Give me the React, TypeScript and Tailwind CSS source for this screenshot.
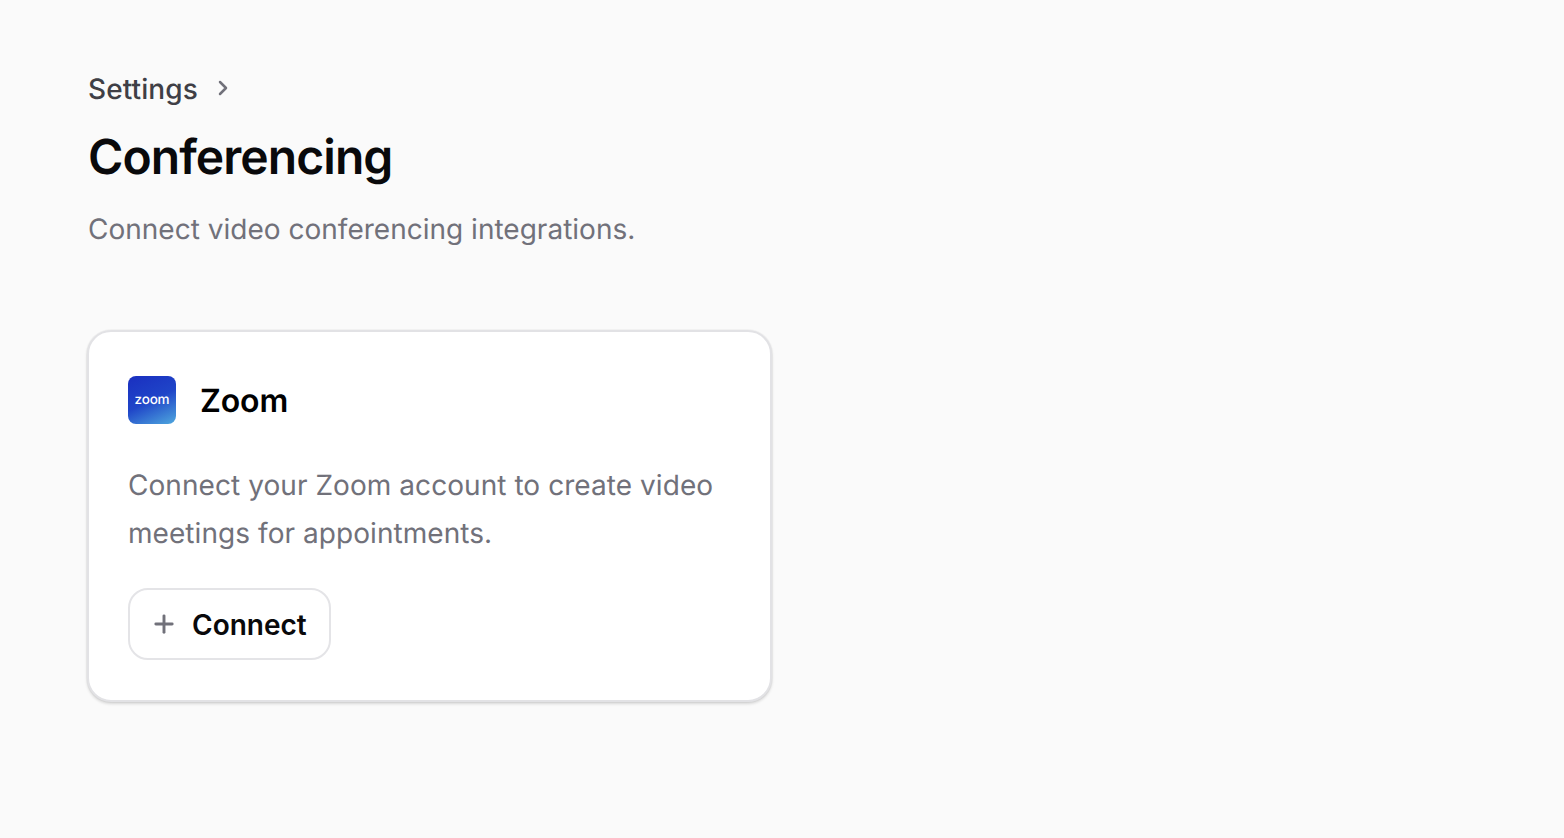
import React from 'react';
import { ChevronRight, Plus } from 'lucide-react';

export default function App() {
  return (
    <div className="min-h-[838px] bg-[#fafafa] pl-[88px] pt-[69px] font-['Inter',sans-serif] antialiased [text-rendering:geometricPrecision]">
      <div className="flex h-[40px] items-center gap-[13px] text-[28px] font-medium tracking-[0.1px] text-[#3f3f46]">
        <span>Settings</span>
        <ChevronRight className="-mt-[2px] h-[24px] w-[24px] text-[#71717a]" strokeWidth={2.5} />
      </div>
      <h1 className="mt-[18px] text-[48px] font-semibold leading-[60px] tracking-[-0.92px] text-[#09090b]">Conferencing</h1>
      <p className="mt-[22px] text-[28px] leading-[40px] tracking-[0.01px] text-[#71717a]">Connect video conferencing integrations.</p>
      <div className="mt-[81px] w-[685px] -ml-px rounded-[24px] border-2 border-[#e2e2e5] bg-white px-[39px] pb-[40px] pt-[40px] shadow-[0_0_0_1px_rgba(0,0,0,0.03),0_2px_3px_rgba(0,0,0,0.14)]">
        <div className="flex items-center gap-[24px] pt-[4px]">
          <div className="flex h-[48px] w-[48px] items-center justify-center rounded-[8px] bg-[linear-gradient(155deg,#1a2fc0_0%,#1f45c8_50%,#4fa8de_100%)] text-[13.5px] font-medium tracking-[-0.2px] text-white">zoom</div>
          <span className="translate-y-[1px] text-[32px] font-semibold tracking-[-0.15px] text-black">Zoom</span>
        </div>
        <p className="mt-[37px] text-[28px] leading-[48px] tracking-[0.06px] text-[#71717a]">Connect your Zoom account to create video meetings for appointments.</p>
        <button className="mt-[31px] flex h-[72px] items-center gap-[14px] rounded-[20px] border-2 border-[#e4e4e7] bg-white pl-[20px] pr-[22px] text-[28px] font-semibold text-[#09090b]">
          <Plus className="h-[28px] w-[28px] text-[#71717a]" strokeWidth={2.5} />
          <span className="translate-y-[1px]">Connect</span>
        </button>
      </div>
    </div>
  );
}
